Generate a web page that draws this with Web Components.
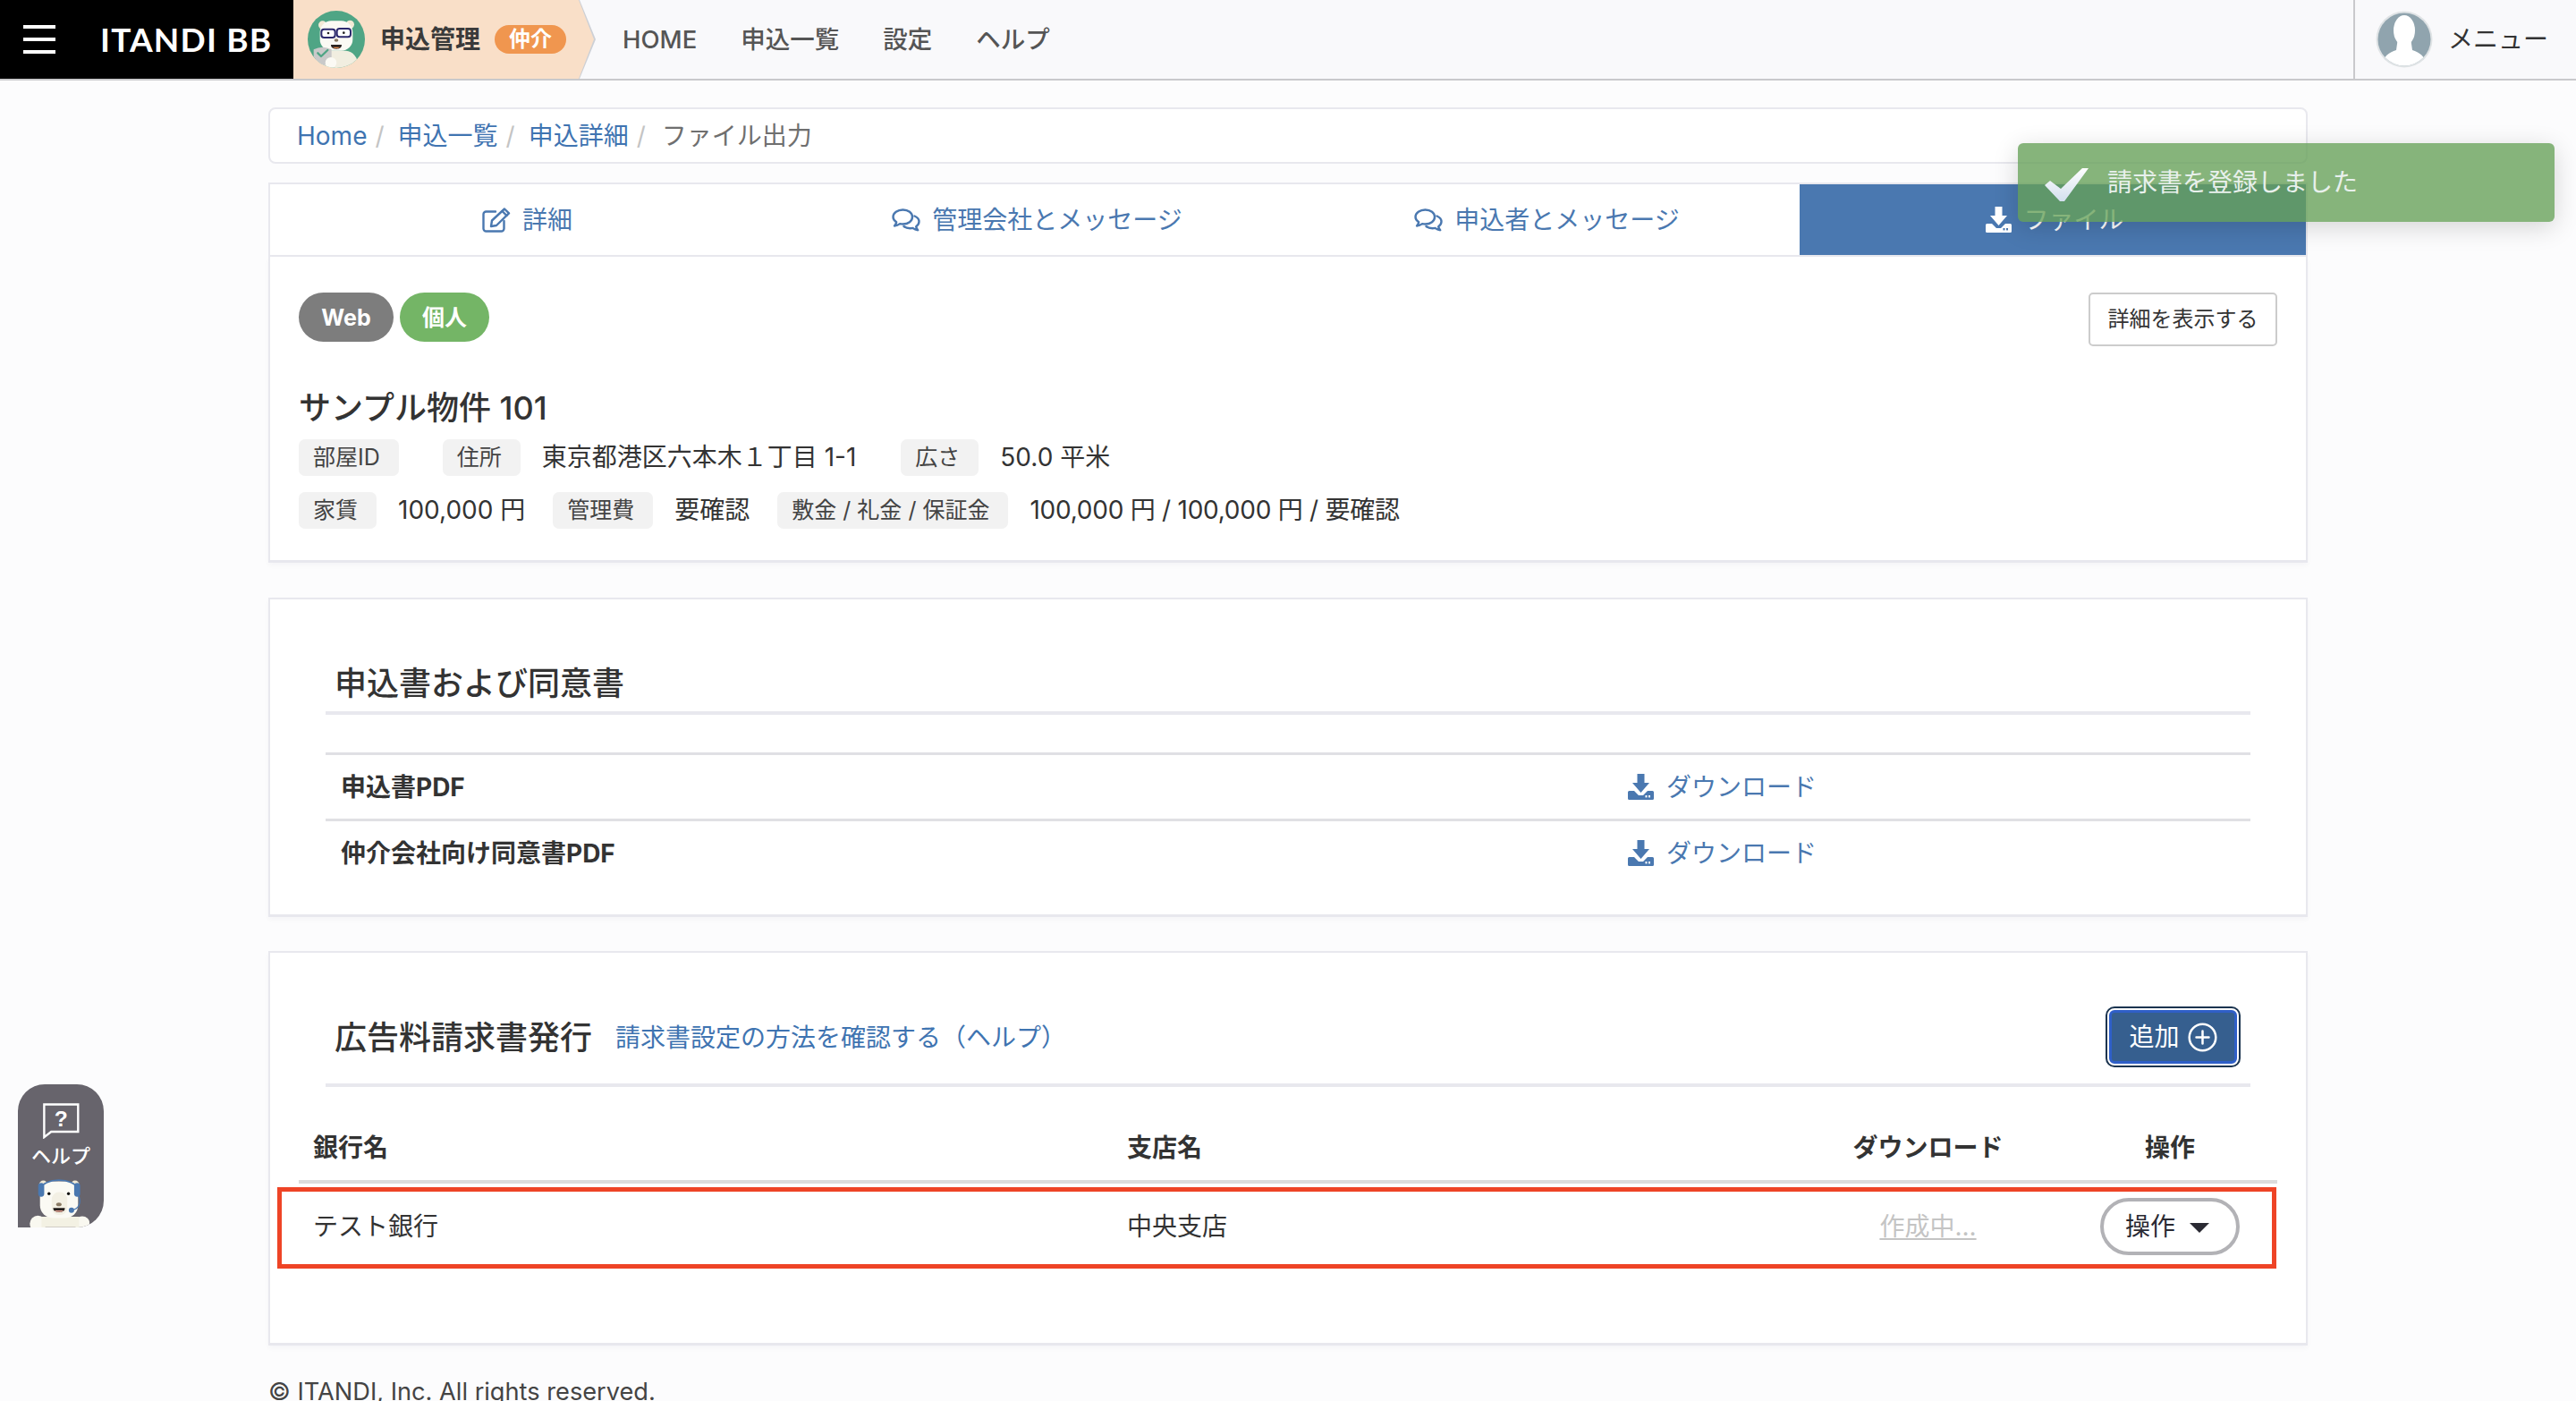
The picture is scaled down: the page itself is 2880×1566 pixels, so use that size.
<!DOCTYPE html>
<html lang="ja">
<head>
<meta charset="utf-8">
<title>ファイル出力</title>
<style>
html,body{margin:0;padding:0}
body{background:#fcfcfd;height:1566px;overflow:hidden;position:relative;color:#333;font-family:Inter,"Noto Sans CJK JP",sans-serif;font-size:28px;line-height:40px}
.wrap{width:2280px;margin:30px auto 0}
</style>
</head>
<body>
<it-header>
  <it-navlink>HOME</it-navlink>
  <it-navlink>申込一覧</it-navlink>
  <it-navlink>設定</it-navlink>
  <it-navlink>ヘルプ</it-navlink>
</it-header>

<div class="wrap">
  <it-breadcrumb>
    <it-crumb link>Home</it-crumb>
    <it-crumb link>申込一覧</it-crumb>
    <it-crumb link>申込詳細</it-crumb>
    <it-crumb style="margin-left:3px">ファイル出力</it-crumb>
  </it-breadcrumb>

  <it-tabs>
    <it-tab icon="edit">詳細</it-tab>
    <it-tab icon="chat">管理会社とメッセージ</it-tab>
    <it-tab icon="chat">申込者とメッセージ</it-tab>
    <it-tab icon="download" active>ファイル</it-tab>
  </it-tabs>

  <it-summary>
    <it-badge slot="badges" tone="gray">Web</it-badge>
    <it-badge slot="badges" tone="green">個人</it-badge>
    <it-plain-button slot="action">詳細を表示する</it-plain-button>
    <span slot="title">サンプル物件 101</span>
    <it-spec slot="row1" label="部屋ID" style="margin-right:25px"></it-spec>
    <it-spec slot="row1" label="住所" style="margin-right:50px">東京都港区六本木１丁目 1-1</it-spec>
    <it-spec slot="row1" label="広さ">50.0 平米</it-spec>
    <it-spec slot="row2" label="家賃" style="margin-right:31px">100,000 円</it-spec>
    <it-spec slot="row2" label="管理費" style="margin-right:31px">要確認</it-spec>
    <it-spec slot="row2" label="敷金 / 礼金 / 保証金" style="letter-spacing:-.25px">100,000 円 / 100,000 円 / 要確認</it-spec>
  </it-summary>

  <it-card style="margin-top:39px;height:357px">
    <it-section-head style="height:125px">申込書および同意書</it-section-head>
    <div style="height:46px"></div>
    <it-doc-row>申込書PDF</it-doc-row>
    <it-doc-row>仲介会社向け同意書PDF</it-doc-row>
  </it-card>

  <it-card style="margin-top:38px;height:441px">
    <it-section-head style="height:146px" link="請求書設定の方法を確認する（ヘルプ）">広告料請求書発行<it-add-button slot="action">追加</it-add-button></it-section-head>
    <it-invoice-table>
      <it-invoice-row head>
        <span>銀行名</span><span>支店名</span><span>ダウンロード</span><span>操作</span>
      </it-invoice-row>
      <it-invoice-row highlight>
        <span>テスト銀行</span><span>中央支店</span><it-pending>作成中...</it-pending><it-pill-button>操作</it-pill-button>
      </it-invoice-row>
    </it-invoice-table>
  </it-card>

  <it-footer>© ITANDI, Inc. All rights reserved.</it-footer>
</div>

<it-toast>請求書を登録しました</it-toast>
<it-help>ヘルプ</it-help>

<script>
const ICONS = {
  edit: c => `<svg width="32" height="28" viewBox="0 0 32 28" fill="none" stroke="${c}" stroke-width="2.4" stroke-linecap="round" stroke-linejoin="round"><path d="M15 4.5H4.5a3 3 0 0 0-3 3v16a3 3 0 0 0 3 3h17a3 3 0 0 0 3-3V15"/><path d="M11 14.5 25 1.5l5 4.8-14 13.700-6 1z"/><path d="M22.5 4l5 5"/></svg>`,
  chat: c => `<svg width="32" height="26" viewBox="0 0 32 26" fill="none" stroke="${c}" stroke-width="2.4" stroke-linejoin="round" stroke-linecap="round"><path d="M12.5 1.5c6 0 10.5 3.5 10.5 8s-4.500 8-10.500 8c-1.200 0-2.300-.15-3.400-.4-1.800 1.400-3.800 2.200-6.100 2.400 1.100-1.300 1.900-2.800 2.200-4.300C3 13.800 1.500 11.800 1.500 9.500c0-4.500 5-8 11-8z"/><path d="M25.500 8.500c3 1.300 5 3.600 5 6.300 0 2.200-1.300 4.100-3.300 5.400.3 1.400 1 2.800 2 4-2.200-.2-4.100-1-5.700-2.300-1 .2-2 .3-3 .3-2.800 0-5.300-.8-7-2.200"/></svg>`,
  download: c => `<svg width="29" height="29" viewBox="0 0 29 29"><path fill="${c}" d="M10.500 0h8v10h5.500L14.500 21 5 10h5.500z"/><path fill="${c}" d="M1.500 19H7l5 5h5l5-5h5.500a1.500 1.500 0 0 1 1.500 1.500v7a1.500 1.500 0 0 1-1.500 1.500h-26A1.500 1.500 0 0 1 0 27.500v-7A1.500 1.500 0 0 1 1.500 19z"/><rect x="19.500" y="24" width="2" height="2.400" fill="${c==='#fff'?'#4a78b0':'#fff'}"/><rect x="23" y="24" width="2" height="2.400" fill="${c==='#fff'?'#4a78b0':'#fff'}"/></svg>`
};

function define(name, css, html) {
  customElements.define(name, class extends HTMLElement {
    constructor() {
      super();
      this.attachShadow({mode:'open'}).innerHTML = `<style>${css}</style>${html}`;
    }
  });
}

define('it-navlink', `:host{display:block;font-size:27.5px;font-weight:500;color:#555;line-height:40px;white-space:nowrap}`, `<slot></slot>`);

customElements.define('it-header', class extends HTMLElement {
  constructor() {
    super();
    this.attachShadow({mode:'open'}).innerHTML = `<style>
      :host{display:flex;height:88px;background:#f9f9fb;border-bottom:2px solid #c9c9cc}
      .brand{width:328px;flex:none;background:#000;display:flex;align-items:center;box-sizing:border-box;padding-left:26px;color:#fff}
      .burger{width:36px;height:32px;display:flex;flex-direction:column;justify-content:space-between;flex:none}
      .burger i{display:block;height:4px;background:#fff}
      .logo{margin-left:50px;font-size:37px;font-weight:700;letter-spacing:1.2px;line-height:44px;white-space:nowrap;font-family:Lato,sans-serif}
      .edge{flex:none;width:338px;background:#cdd0d6;clip-path:polygon(0 0,320px 0,338px 44px,320px 88px,0 88px)}
      .product{width:336px;height:88px;background:#f9dfc8;clip-path:polygon(0 0,319px 0,336px 44px,319px 88px,0 88px);display:flex;align-items:center;box-sizing:border-box;padding-left:16px}
      .product svg{flex:none}
      .name{margin-left:17px;font-size:28px;font-weight:700;color:#3a3a3a;white-space:nowrap;line-height:40px}
      .tag{margin-left:16px;width:80px;height:32px;border-radius:16px;background:#f0964f;color:#fff;font-size:24px;font-weight:700;display:flex;align-items:center;justify-content:center;line-height:32px}
      nav{display:flex;align-items:center;gap:49px;margin-left:30px;flex:1}
      .menu{flex:none;width:249px;box-sizing:border-box;border-left:2px solid #c9c9cc;display:flex;align-items:center;padding-left:23px;gap:17px;font-size:28px;color:#333}
    </style>
    <div class="brand"><div class="burger"><i></i><i></i><i></i></div><div class="logo">ITANDI BB</div></div>
    <div class="edge"><div class="product">
      <svg width="64" height="64" viewBox="72 36 192 192"><defs><clipPath id="c"><circle cx="168" cy="132" r="96"/></clipPath></defs>
        <g clip-path="url(#c)"><rect x="72" y="36" width="192" height="192" fill="#4fa585"/>
        <circle cx="122" cy="84" r="14" fill="#f3ead6"/><circle cx="214" cy="82" r="14" fill="#f3ead6"/>
        <path d="M100 228v-30c0-14 12-26 30-28h70c24 2 40 20 44 58z" fill="#f1eee0"/>
        <rect x="113" y="70" width="110" height="100" rx="38" fill="#fbfaf4"/>
        <rect x="118" y="98" width="46" height="28" rx="9" fill="#fff" stroke="#2d2a6e" stroke-width="6"/>
        <rect x="170" y="96" width="46" height="28" rx="9" fill="#fff" stroke="#2d2a6e" stroke-width="6"/>
        <circle cx="141" cy="111" r="4" fill="#222"/><circle cx="193" cy="110" r="4" fill="#222"/>
        <ellipse cx="168" cy="135" rx="7" ry="5" fill="#8a7a64"/>
        <path d="M150 150h36c0 10-8 14-18 14s-18-4-18-14z" fill="#2a2320"/><path d="M156 158h24c-4 5-20 5-24 0z" fill="#ef8f4e"/>
        <path d="M92 166q15-8 30-8t30 8v24q0 20-30 32-30-12-30-32z" fill="#c9c9c9"/>
        <path d="M106 178l11 11 22-21" fill="none" stroke="#4fa585" stroke-width="7" stroke-linecap="round" stroke-linejoin="round"/>
        <ellipse cx="150" cy="210" rx="19" ry="18" fill="#fbfaf4"/></g>
      </svg>
      <span class="name">申込管理</span><span class="tag">仲介</span>
    </div></div>
    <nav><slot></slot></nav>
    <div class="menu">
      <svg width="64" height="64" viewBox="0 0 64 64"><defs><clipPath id="m"><circle cx="32" cy="32" r="29.500"/></clipPath></defs><circle cx="32" cy="32" r="31.500" fill="#dfe3e5"/><g clip-path="url(#m)"><rect width="64" height="64" fill="#90a4ae"/><ellipse cx="32" cy="22" rx="12" ry="17" fill="#fff"/><path d="M25 30h14l2 14c8 3 15 6 17 20H6c2-14 9-17 17-20z" fill="#fff"/></g></svg>
      <span>メニュー</span>
    </div>`;
  }
});

define('it-breadcrumb', `:host{display:flex;align-items:center;box-sizing:border-box;height:63px;background:#fff;border:2px solid #e8e8ee;border-radius:8px;padding-left:30px;font-size:28px}`, `<slot></slot>`);

customElements.define('it-crumb', class extends HTMLElement {
  constructor() {
    super();
    const link = this.hasAttribute('link');
    this.attachShadow({mode:'open'}).innerHTML = `<style>
      :host{display:inline-flex;align-items:center;line-height:40px;color:${link?'#3f74b1':'#6f6f6f'};white-space:nowrap}
      i{font-style:normal;color:#c4c4c4;margin:0 15px 0 9px}
    </style><slot></slot>${link?'<i>/</i>':''}`;
  }
});

define('it-tabs', `:host{display:flex;box-sizing:border-box;height:83px;margin-top:21px;background:#fff;border:2px solid #e8e8ee}`, `<slot></slot>`);

customElements.define('it-tab', class extends HTMLElement {
  constructor() {
    super();
    const active = this.hasAttribute('active');
    const c = active ? '#fff' : '#4a78b0';
    this.attachShadow({mode:'open'}).innerHTML = `<style>
      :host{flex:${active?'1 1 0':'0 0 570px'};box-sizing:border-box;padding-left:5px;display:flex;align-items:center;justify-content:center;gap:13px;color:${c};background:${active?'#4a78b0':'transparent'};line-height:40px;font-size:28px;white-space:nowrap}
      svg{display:block;flex:none}
    </style>${ICONS[this.getAttribute('icon')](c)}<span><slot></slot></span>`;
  }
});

define('it-card', `:host{display:block;box-sizing:border-box;background:#fff;border:2px solid #e8e8ee;border-bottom-width:3px;box-shadow:0 3px 6px rgba(30,30,60,.03);padding:0 62px}`, `<slot></slot>`);

define('it-summary', `
  :host{display:block;box-sizing:border-box;background:#fff;border:2px solid #e8e8ee;border-top:0;border-bottom-width:3px;box-shadow:0 3px 6px rgba(30,30,60,.03);padding:40px 32px 0;height:342px}
  .top{display:flex;justify-content:space-between;align-items:flex-start;height:60px}
  .badges{display:flex;gap:7px}
  h2{margin:47px 0 0;font-size:36px;font-weight:500;line-height:44px;color:#333;white-space:nowrap}
  .row{display:flex;margin-top:13px;height:41px}
  .row + .row{margin-top:18px}
`, `<div class="top"><div class="badges"><slot name="badges"></slot></div><slot name="action"></slot></div>
    <h2><slot name="title"></slot></h2>
    <div class="row"><slot name="row1"></slot></div>
    <div class="row"><slot name="row2"></slot></div>`);

customElements.define('it-badge', class extends HTMLElement {
  constructor() {
    super();
    const green = this.getAttribute('tone') === 'green';
    this.attachShadow({mode:'open'}).innerHTML = `<style>:host{display:flex;align-items:center;justify-content:center;width:${green?100:106}px;height:55px;border-radius:28px;background:${green?'#74b566':'#7d7d7d'};color:#fff;font-size:25px;font-weight:700;line-height:36px}</style><slot></slot>`;
  }
});

define('it-plain-button', `:host{display:flex;align-items:center;justify-content:center;box-sizing:border-box;width:211px;height:60px;background:#fff;border:2px solid #ccc;border-radius:5px;font-size:24px;color:#333;line-height:34px;white-space:nowrap}`, `<slot></slot>`);

customElements.define('it-spec', class extends HTMLElement {
  constructor() {
    super();
    this.attachShadow({mode:'open'}).innerHTML = `<style>
      :host{display:flex;align-items:center;gap:24px;margin-right:32px;white-space:nowrap;color:#333;font-size:28px;line-height:41px}
      b{font-weight:400;font-size:25px;letter-spacing:0;background:#f2f2f2;border-radius:7px;padding:0 21px 0 16px;height:41px;line-height:41px;display:block;color:#444}
    </style><b>${this.getAttribute('label')}</b><span><slot></slot></span>`;
  }
});

customElements.define('it-section-head', class extends HTMLElement {
  constructor() {
    super();
    const link = this.getAttribute('link');
    this.attachShadow({mode:'open'}).innerHTML = `<style>
      :host{display:flex;align-items:flex-end;box-sizing:border-box;position:relative;padding:0 11px 0 10px}
      .bar{position:absolute;left:0;right:0;bottom:-4px;height:4px;background:#e8e8ee}
      .h{font-size:36px;font-weight:500;line-height:50px;color:#333;white-space:nowrap;margin-bottom:${link?'26px':'6px'}}
      .a{color:#3f74b1;font-size:28px;line-height:40px;margin-left:26px;margin-bottom:31px;white-space:nowrap}
      .act{margin-left:auto;margin-bottom:18px}
    </style><div class="h"><slot></slot></div>${link?`<div class="a">${link}</div>`:''}<div class="act"><slot name="action"></slot></div><div class="bar"></div>`;
  }
});

customElements.define('it-doc-row', class extends HTMLElement {
  constructor() {
    super();
    this.attachShadow({mode:'open'}).innerHTML = `<style>
      :host{display:grid;grid-template-columns:1439px 1fr;align-items:center;height:74px;box-sizing:border-box;border-top:3px solid #e0e0e4;padding-left:17px}
      b{font-weight:700;color:#333;line-height:40px;font-size:28px}
      .dl{display:flex;align-items:center;gap:14px;color:#4a78b0;font-size:28px;line-height:40px}
      svg{display:block;flex:none}
    </style><b><slot></slot></b><div class="dl">${ICONS.download('#4a78b0')}<span>ダウンロード</span></div>`;
  }
});

define('it-add-button', `
  :host{display:flex;align-items:center;box-sizing:border-box;width:151px;height:68px;border:2px solid #1b3450;border-radius:10px;background:#fff;padding:2px}
  .in{flex:1;height:100%;box-sizing:border-box;background:#365f8f;border:3px solid #2f5fc8;border-radius:6px;display:flex;align-items:center;justify-content:center;gap:9px;color:#fff;font-size:28px;line-height:40px}
  svg{display:block}
`, `<div class="in"><span><slot></slot></span><svg width="33" height="33" viewBox="0 0 33 33" fill="none" stroke="#fff" stroke-width="2.5" stroke-linecap="round"><circle cx="16.500" cy="16.500" r="14.800"/><path d="M16.500 9.500v14M9.500 16.500h14"/></svg></div>`);

define('it-invoice-table', `:host{display:block;margin:4px -30px 0}`, `<slot></slot>`);

customElements.define('it-invoice-row', class extends HTMLElement {
  constructor() {
    super();
    const head = this.hasAttribute('head');
    const hl = this.hasAttribute('highlight');
    this.attachShadow({mode:'open'}).innerHTML = `<style>
      :host{display:block;position:relative;font-weight:${head?700:400};color:#333;font-size:28px;line-height:40px}
      .g{display:grid;grid-template-columns:909px 762px 301px 240px;align-items:${head?'end':'center'};box-sizing:border-box;height:${head?'108px':'96px'};${head?'border-bottom:4px solid #dcdcdc;padding-bottom:16px;':''}}
      ::slotted(*){justify-self:center}
      ::slotted(:nth-child(1)){justify-self:start;padding-left:16px}
      ::slotted(:nth-child(2)){justify-self:start;padding-left:17px}
      .mark{position:absolute;left:-24px;right:1px;top:4px;bottom:1px;border:5px solid #ee4426;pointer-events:none}
    </style><div class="g"><slot></slot></div>${hl?'<div class="mark"></div>':''}`;
  }
});

define('it-pending', `:host{display:block;color:#c4c4c4;text-decoration:underline;text-underline-offset:3px;font-size:28px;line-height:40px}`, `<slot></slot>`);

define('it-pill-button', `
  :host{display:flex;align-items:center;box-sizing:border-box;width:156px;height:64px;border:4px solid #b2b2b6;border-radius:32px;background:#fff;padding-left:24px;gap:16px;font-size:28px;color:#2a2a33;line-height:40px}
  i{display:block;width:0;height:0;border-left:11.5px solid transparent;border-right:11.5px solid transparent;border-top:11px solid #2a2a33;margin-top:3px}
`, `<span><slot></slot></span><i></i>`);

define('it-footer', `:host{display:block;margin-top:32px;line-height:40px;color:#444;font-size:27.2px;white-space:nowrap}`, `<slot></slot>`);

define('it-toast', `
  :host{position:absolute;left:2256px;top:160px;width:600px;height:88px;box-sizing:border-box;background:rgba(101,160,88,.787);border-radius:6px;box-shadow:0 6px 28px rgba(0,0,0,.16);display:flex;align-items:center;padding:0 0 1px 30px;gap:21px;color:#e8f0ec;font-size:28px;line-height:40px;white-space:nowrap}
  svg{display:block;flex:none;margin-top:7px}
`, `<svg width="49" height="38" viewBox="0 0 49 38"><defs><linearGradient id="g" x1="0" y1="0" x2="0" y2="1"><stop offset="0" stop-color="#fff"/><stop offset="1" stop-color="#d3dfee"/></linearGradient></defs><path d="M42 0h7L22 37h-5L0 19l6-5 12 9z" fill="url(#g)"/></svg><span><slot></slot></span>`);

define('it-help', `
  :host{position:absolute;left:20px;top:1212px;width:96px;height:160px;background:#67646c;border-radius:30px 30px 30px 0;color:#fff;overflow:hidden;display:block;text-align:center}
  .q{display:block;margin:21px auto 0}
  .t{font-size:22px;line-height:28px;margin-top:3px;font-weight:500;font-family:"Noto Sans CJK JP",sans-serif}
  .bear{position:absolute;left:13px;bottom:0;display:block}
`, `<svg class="q" width="41" height="40" viewBox="145 132 120 116"><path d="M149 136H260V225H172L149 243Z" fill="none" stroke="#fff" stroke-width="7"/><text x="204" y="207" text-anchor="middle" font-size="72" font-weight="700" fill="#fff" font-family="Liberation Sans, sans-serif">?</text></svg>
<div class="t"><slot></slot></div>
<svg class="bear" width="67" height="54" viewBox="100 385 200 160">
  <circle cx="128" cy="533" r="27" fill="#f9f8f0"/><circle cx="276" cy="533" r="25" fill="#f9f8f0"/>
  <path d="M140 510h125v35H140z" fill="#f3f1e3"/>
  <circle cx="146" cy="403" r="14" fill="#efe8d4"/><circle cx="252" cy="403" r="14" fill="#efe8d4"/>
  <rect x="135" y="392" width="127" height="122" rx="42" fill="#fbfaf4"/>
  <path d="M137 418C145 378 250 378 262 418" fill="none" stroke="#4a78b0" stroke-width="5"/>
  <rect x="129" y="397" width="20" height="46" rx="10" fill="#4a78b0"/><rect x="249" y="397" width="20" height="46" rx="10" fill="#4a78b0"/>
  <path d="M264 440c10 24 0 44-24 48" fill="none" stroke="#4a78b0" stroke-width="4"/><circle cx="240" cy="488" r="9" fill="#4a78b0"/>
  <rect x="174" y="428" width="52" height="76" rx="24" fill="#f3f0e4"/>
  <circle cx="165" cy="433" r="5" fill="#111"/><circle cx="230" cy="433" r="5" fill="#111"/>
  <ellipse cx="198" cy="469" rx="9" ry="6" fill="#8a7a64"/>
  <path d="M179 481h39c0 10-8 14-19 14s-20-4-20-14z" fill="#221c1a"/><path d="M184 489h29c-3 6-26 6-29 0z" fill="#f2a99a"/>
</svg>`);
</script>
</body>
</html>
